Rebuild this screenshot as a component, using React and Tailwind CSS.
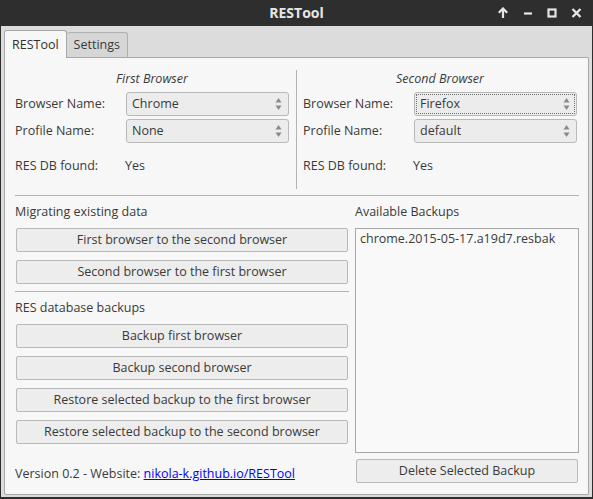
import React from "react";

function Combo({ value, focused }) {
  return (
    <div
      className={
        "h-[24px] w-[163px] flex items-center justify-between rounded-[3px] border border-[#b9b9b9] bg-[#ececec] pl-[5px] pr-[6px] " +
        (focused ? "outline-1 outline-dotted outline-[#707070] -outline-offset-3" : "")
      }
    >
      <span>{value}</span>
      <svg width="7" height="14" viewBox="0 0 7 14">
        <path d="M3.5 1 L6.5 5.5 L0.5 5.5 Z" fill="#8a8a8a" />
        <path d="M3.5 13 L6.5 8.5 L0.5 8.5 Z" fill="#8a8a8a" />
      </svg>
    </div>
  );
}

function BrowserGroup({ title, name, profile, focused }) {
  return (
    <div className="w-[274px] flex flex-col">
      <div className="h-[20px] mt-[1px] flex items-center justify-center italic">{title}</div>
      <div className="mt-[3px] flex items-center">
        <span className="w-[111px]">Browser Name:</span>
        <Combo value={name} focused={focused} />
      </div>
      <div className="mt-[3px] flex items-center">
        <span className="w-[111px]">Profile Name:</span>
        <Combo value={profile} />
      </div>
      <div className="mt-[14px] h-[18px] flex items-center">
        <span className="w-[110px]">RES DB found:</span>
        <span>Yes</span>
      </div>
    </div>
  );
}

function Btn({ children, className = "" }) {
  return (
    <div
      className={
        "h-[24px] flex items-center justify-center rounded-[2px] border border-[#b9b9b9] bg-[#ededed] " + className
      }
    >
      {children}
    </div>
  );
}

export default function App() {
  return (
    <div className="w-[593px] h-[499px] flex flex-col font-['Open_Sans',sans-serif] text-[12.5px] leading-[18px] text-[#3a3a3a]">
      <div className="h-[26px] bg-[#2e2e2e] grid grid-cols-[1fr_auto_1fr] items-center">
        <div />
        <div className="font-bold text-[14px] text-[#e6e6e6]">RESTool</div>
        <div className="flex items-center justify-end gap-[14px] pr-[11px] text-[#e6e6e6]">
          <svg width="12" height="12" viewBox="0 0 12 12">
            <path d="M6 1.5 V11 M1.8 5.7 L6 1.5 L10.2 5.7" stroke="#e6e6e6" strokeWidth="2.2" fill="none" />
          </svg>
          <svg width="10" height="12" viewBox="0 0 10 12">
            <path d="M1 6.5 H9" stroke="#e6e6e6" strokeWidth="2.2" fill="none" />
          </svg>
          <svg width="10" height="12" viewBox="0 0 10 12">
            <rect x="1.5" y="2.5" width="7" height="7" stroke="#e6e6e6" strokeWidth="2.2" fill="none" />
          </svg>
          <svg width="11" height="12" viewBox="0 0 11 12">
            <path d="M1.5 2 L9.5 10 M9.5 2 L1.5 10" stroke="#e6e6e6" strokeWidth="2.3" fill="none" />
          </svg>
        </div>
      </div>
      <div className="flex-1 min-h-0 flex flex-col bg-[#dcdcdc] border-x border-b-2 border-[#2e2e2e] pl-[3px] pr-[3px] pt-[4px] pb-[2px]">
        <div className="flex items-end h-[27px]">
          <div className="relative z-10 h-[28px] -mb-px px-[7px] flex items-center rounded-t-[3px] border border-b-0 border-[#a8a8a8] bg-[#f7f7f7] text-[#303030]">
            RESTool
          </div>
          <div className="h-[25px] px-[7px] flex items-center rounded-t-[3px] border border-l-0 border-b-0 border-[#b0b0b0] bg-[#d6d6d6]">
            Settings
          </div>
        </div>
        <div className="flex-1 min-h-0 border border-[#a8a8a8] rounded-b-[2px] rounded-tr-[2px] bg-[#f7f7f7] pl-[10px] pr-[9px] pt-[10px] flex flex-col">
          <div className="flex h-[121px]">
            <BrowserGroup title="First Browser" name="Chrome" profile="None" />
            <div className="ml-[7px] mr-[6px] mt-[2px] w-px bg-[#b4b4b4]" />
            <BrowserGroup title="Second Browser" name="Firefox" profile="default" focused />
          </div>
          <div className="mt-[6px] h-px w-[564px] bg-[#b4b4b4]" />
          <div className="mt-[7px] flex gap-[6px]">
            <div className="w-[334px] flex flex-col">
              <div className="h-[18px]">Migrating existing data</div>
              <Btn className="mt-[7px] mx-px">First browser to the second browser</Btn>
              <Btn className="mt-[8px] mx-px">Second browser to the first browser</Btn>
              <div className="mt-[7px] h-px bg-[#b4b4b4]" />
              <div className="mt-[7px] h-[18px]">RES database backups</div>
              <Btn className="mt-[7px] mx-px">Backup first browser</Btn>
              <Btn className="mt-[8px] mx-px">Backup second browser</Btn>
              <Btn className="mt-[8px] mx-px">Restore selected backup to the first browser</Btn>
              <Btn className="mt-[8px] mx-px">Restore selected backup to the second browser</Btn>
              <div className="mt-[21px] h-[18px]">
                Version 0.2 - Website:{" "}
                <span className="text-[#0000ff] underline">nikola-k.github.io/RESTool</span>
              </div>
            </div>
            <div className="w-[224px] flex flex-col">
              <div className="h-[18px]">Available Backups</div>
              <div className="mt-[7px] h-[225px] border border-[#a8a8a8] bg-[#f9f9f9] px-[4px] pt-[1px]">
                chrome.2015-05-17.a19d7.resbak
              </div>
              <Btn className="mt-[6px] mx-px">Delete Selected Backup</Btn>
            </div>
          </div>
        </div>
      </div>
    </div>
  );
}
